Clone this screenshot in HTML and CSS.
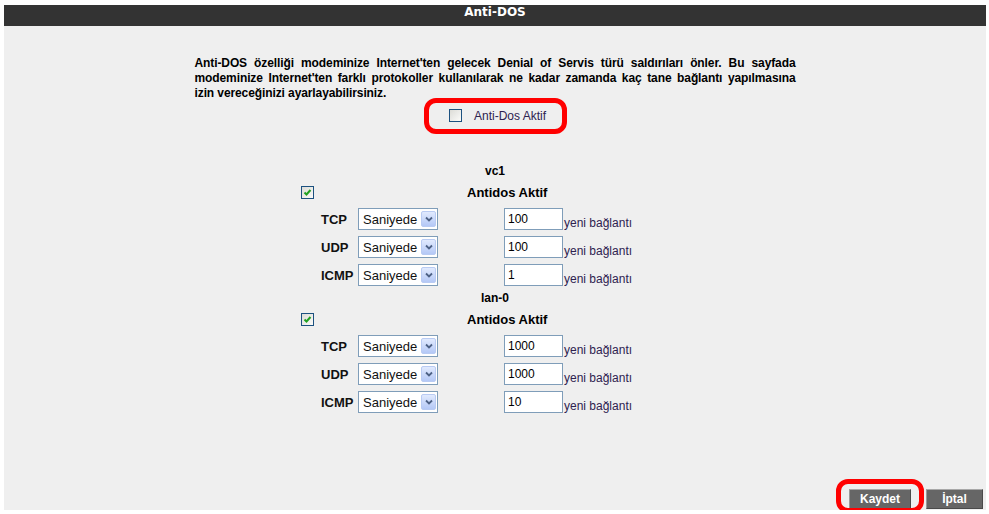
FILE: index.html
```html
<!DOCTYPE html>
<html lang="tr">
<head>
    <meta charset="UTF-8">
    <meta name="viewport" content="width=device-width, initial-scale=1.0">
    <title>Anti-DOS</title>
    <link rel="stylesheet" href="styles.css">
</head>
<body>
    <div class="panel">
        <div class="panel-title">Anti-DOS</div>
        <div class="panel-body">
            <p class="intro">
                <span class="line">Anti-DOS özelliği modeminize Internet'ten gelecek Denial of Servis türü saldırıları önler. Bu sayfada</span>
                <span class="line">modeminize Internet'ten farklı protokoller kullanılarak ne kadar zamanda kaç tane bağlantı yapılmasına</span>
                <span class="line last">izin vereceğinizi ayarlayabilirsiniz.</span>
            </p>

            <!-- global switch -->
            <div class="toggle-row">
                <label class="toggle"><span class="check"></span>Anti-Dos Aktif<span class="ring"></span></label>
            </div>

            <div class="iface-name">vc1</div>
            <div class="rules">
                <span class="check on"><svg width="11" height="11" viewBox="0 0 11 11"><path d="M2.5 5.5 L4.5 7.5 L8.5 3" fill="none" stroke="#21a121" stroke-width="2"/></svg></span>
                <span class="rules-head">Antidos Aktif</span>

                <span class="proto">TCP</span>
                <span class="select"><span class="select-value">Saniyede</span><span class="select-arrow"><svg width="8" height="6" viewBox="0 0 8 6"><path d="M1 1.5 L4 4.5 L7 1.5" fill="none" stroke="#4d6185" stroke-width="1.8"/></svg></span></span>
                <input class="num" type="text" value="100">
                <span class="unit">yeni bağlantı</span>

                <span class="proto">UDP</span>
                <span class="select"><span class="select-value">Saniyede</span><span class="select-arrow"><svg width="8" height="6" viewBox="0 0 8 6"><path d="M1 1.5 L4 4.5 L7 1.5" fill="none" stroke="#4d6185" stroke-width="1.8"/></svg></span></span>
                <input class="num" type="text" value="100">
                <span class="unit">yeni bağlantı</span>

                <span class="proto">ICMP</span>
                <span class="select"><span class="select-value">Saniyede</span><span class="select-arrow"><svg width="8" height="6" viewBox="0 0 8 6"><path d="M1 1.5 L4 4.5 L7 1.5" fill="none" stroke="#4d6185" stroke-width="1.8"/></svg></span></span>
                <input class="num" type="text" value="1">
                <span class="unit">yeni bağlantı</span>
            </div>

            <div class="iface-name">lan-0</div>
            <div class="rules">
                <span class="check on"><svg width="11" height="11" viewBox="0 0 11 11"><path d="M2.5 5.5 L4.5 7.5 L8.5 3" fill="none" stroke="#21a121" stroke-width="2"/></svg></span>
                <span class="rules-head">Antidos Aktif</span>

                <span class="proto">TCP</span>
                <span class="select"><span class="select-value">Saniyede</span><span class="select-arrow"><svg width="8" height="6" viewBox="0 0 8 6"><path d="M1 1.5 L4 4.5 L7 1.5" fill="none" stroke="#4d6185" stroke-width="1.8"/></svg></span></span>
                <input class="num" type="text" value="1000">
                <span class="unit">yeni bağlantı</span>

                <span class="proto">UDP</span>
                <span class="select"><span class="select-value">Saniyede</span><span class="select-arrow"><svg width="8" height="6" viewBox="0 0 8 6"><path d="M1 1.5 L4 4.5 L7 1.5" fill="none" stroke="#4d6185" stroke-width="1.8"/></svg></span></span>
                <input class="num" type="text" value="1000">
                <span class="unit">yeni bağlantı</span>

                <span class="proto">ICMP</span>
                <span class="select"><span class="select-value">Saniyede</span><span class="select-arrow"><svg width="8" height="6" viewBox="0 0 8 6"><path d="M1 1.5 L4 4.5 L7 1.5" fill="none" stroke="#4d6185" stroke-width="1.8"/></svg></span></span>
                <input class="num" type="text" value="10">
                <span class="unit">yeni bağlantı</span>
            </div>
        </div>
        <div class="panel-actions">
            <button class="btn btn-save">Kaydet<span class="ring"></span></button>
            <button class="btn btn-cancel">İptal</button>
        </div>
    </div>
</body>
</html>
```

FILE: styles.css
```css
body {
    margin: 0;
    background-color: #fff;
    font-family: "Liberation Sans", Arial, sans-serif;
    font-size: 12px;
    color: #000;
}

.panel {
    margin: 5px 0 0 4px;
    width: 982px;
    height: 505px;
    background-color: #efefef;
    display: flex;
    flex-direction: column;
}

.panel-title {
    height: 21px;
    line-height: 21px;
    background-color: #333;
    color: #fff;
    text-align: center;
    font: bold 12px "DejaVu Sans", sans-serif;
}

.panel-body {
    flex: 1;
}

/* intro text, justified block */
.intro {
    width: 601px;
    margin: 30px auto 0;
    font-weight: bold;
    line-height: 15px;
    letter-spacing: -0.1px;
}

.intro .line {
    display: block;
    text-align: justify;
    text-align-last: justify;
}

.intro .line.last {
    text-align-last: left;
}

.toggle-row {
    margin-top: 3px;
    height: 23px;
    text-align: center;
}

.toggle {
    position: relative;
    display: inline-flex;
    align-items: center;
    height: 23px;
    margin-left: 5px;
    color: #2e2250;
}

.toggle .check {
    margin-right: 12px;
}

.ring {
    position: absolute;
    border: 5px solid #f00;
    border-radius: 12px;
    pointer-events: none;
}

.toggle .ring {
    left: -25px;
    right: -21px;
    top: -6px;
    bottom: -7px;
}

.check {
    display: inline-flex;
    align-items: center;
    justify-content: center;
    width: 13px;
    height: 13px;
    box-sizing: border-box;
    border: 1px solid #1c5180;
    background: linear-gradient(135deg, #dcdcd7, #fbfbf9);
}

.iface-name {
    margin-top: 35px;
    height: 18px;
    line-height: 18px;
    text-align: center;
    font-weight: bold;
}

.rules + .iface-name {
    margin-top: 0;
}

.rules {
    display: grid;
    grid-template-columns: 20px 37px 146px 59px auto;
    grid-template-rows: 25px repeat(3, 28px);
    align-items: center;
    margin-left: 297px;
}

.rules-head {
    grid-column: 3 / 6;
    padding-left: 109px;
    font-size: 13px;
    font-weight: bold;
}

.proto {
    grid-column: 2;
    font-size: 13px;
    font-weight: bold;
    color: #111;
}

.select {
    display: inline-flex;
    align-items: center;
    justify-content: space-between;
    width: 80px;
    height: 22px;
    box-sizing: border-box;
    border: 1px solid #7f9db9;
    background-color: #fff;
    padding: 0 1px 0 4px;
    font-size: 13px;
    color: #111;
}

.select-arrow {
    display: flex;
    align-items: center;
    justify-content: center;
    width: 15px;
    height: 16px;
    box-sizing: border-box;
    border: 1px solid #b9cbf3;
    border-radius: 2px;
    background: linear-gradient(#e1eafe, #b4c8f6);
}

.num {
    width: 59px;
    height: 22px;
    box-sizing: border-box;
    margin: 0;
    border: 1px solid #7f9db9;
    background-color: #fff;
    padding: 0 3px;
    font-family: "Liberation Sans", Arial, sans-serif;
    font-size: 12px;
    color: #000;
    outline: none;
}

.unit {
    align-self: end;
    margin: 0 0 3px 1px;
    line-height: 14px;
    color: #2e2250;
}

.panel-actions {
    display: flex;
    justify-content: flex-end;
    gap: 15px;
    padding: 0 3px 1px 0;
}

.btn {
    position: relative;
    height: 20px;
    box-sizing: border-box;
    padding: 0;
    background-color: #666;
    color: #fff;
    border: 1px solid #4a4a4a;
    border-top-color: #a8a8a8;
    border-left-color: #999;
    font-family: "Liberation Sans", Arial, sans-serif;
    font-size: 12px;
    font-weight: bold;
    cursor: pointer;
}

.btn-save {
    width: 62px;
}

.btn-cancel {
    width: 57px;
}

.btn-save .ring {
    left: -14px;
    right: -14px;
    top: -11px;
    bottom: -5px;
}
```
